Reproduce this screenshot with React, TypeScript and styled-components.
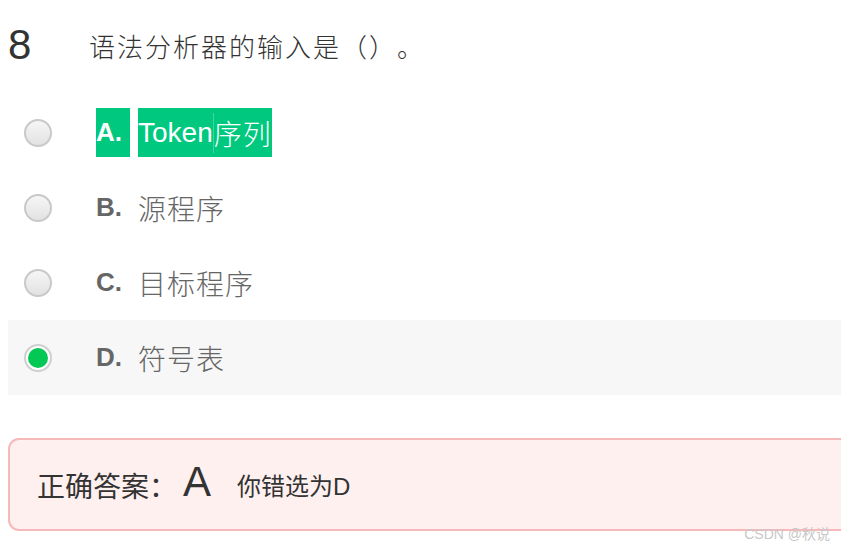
import styled, { createGlobalStyle, css } from "styled-components";

const GlobalStyle = createGlobalStyle`
  html, body {
    margin: 0;
    padding: 0;
    background: #ffffff;
    overflow: hidden;
  }
  body {
    font-family: "Liberation Sans", Arial, "Noto Sans CJK SC", sans-serif;
    text-spacing-trim: space-all;
  }
`;

const Page = styled.div`
  position: relative;
  width: 841px;
  height: 549px;
  padding-left: 8px;
  box-sizing: border-box;
  overflow: hidden;
`;

const QuestionHeader = styled.div`
  display: flex;
  align-items: center;
  height: 95px;
  padding-bottom: 5px;
  box-sizing: border-box;
`;

const QuestionNumber = styled.span`
  width: 81px;
  font-family: "Liberation Sans", Arial, sans-serif;
  font-size: 42px;
  color: #333333;
  line-height: 1;
`;

const QuestionText = styled.span`
  font-family: "Noto Sans CJK SC", sans-serif;
  font-weight: 300;
  font-size: 26px;
  color: #333333;
  letter-spacing: 2px;
  text-spacing-trim: space-all;
`;

const OptionList = styled.div`
  display: flex;
  flex-direction: column;
`;

const OptionRow = styled.div<{ $selected: boolean }>`
  display: flex;
  align-items: center;
  height: 75px;
  background: ${({ $selected }) => ($selected ? "#f7f7f7" : "transparent")};
`;

const Radio = styled.span<{ $checked: boolean }>`
  position: relative;
  width: 28px;
  height: 28px;
  margin-left: 16px;
  margin-right: 44px;
  border-radius: 50%;
  box-sizing: border-box;
  border: 2px solid #c9c9c9;
  background: linear-gradient(#f6f6f6, #e2e2e2);
  flex-shrink: 0;
  ${({ $checked }) =>
    $checked &&
    css`
      background: #ffffff;
      border-color: #cfcfcf;
      &::after {
        content: "";
        position: absolute;
        inset: 2px;
        border-radius: 50%;
        background: #03c853;
      }
    `}
`;

const Letter = styled.span<{ $correct: boolean }>`
  display: inline-flex;
  align-items: center;
  height: 49px;
  width: 34px;
  white-space: pre;
  font-family: "Liberation Sans", Arial, sans-serif;
  font-weight: bold;
  font-size: 26px;
  color: ${({ $correct }) => ($correct ? "#ffffff" : "#666666")};
  background: ${({ $correct }) => ($correct ? "#00c97f" : "transparent")};
  margin-right: 8px;
  overflow: hidden;
`;

const OptionText = styled.span<{ $correct: boolean }>`
  display: inline-flex;
  align-items: center;
  height: 49px;
  font-family: "Liberation Sans", Arial, "Noto Sans CJK SC", sans-serif;
  font-size: 28px;
  color: ${({ $correct }) => ($correct ? "#ffffff" : "#666666")};
  background: ${({ $correct }) => ($correct ? "#00c97f" : "transparent")};
`;

const CjkPart = styled.span<{ $correct: boolean }>`
  font-family: "Noto Sans CJK SC", sans-serif;
  font-weight: 300;
  font-size: 28px;
  letter-spacing: 1px;
  ${({ $correct }) =>
    $correct &&
    css`
      border-left: 1px solid #3cd89c;
    `}
`;

const AnswerBox = styled.div`
  display: flex;
  align-items: center;
  margin-top: 43px;
  height: 93px;
  width: 850px;
  box-sizing: border-box;
  padding-left: 27px;
  border: 2px solid #f6b8b8;
  border-radius: 11px;
  background: #fff0f0;
  color: #333333;
`;

const AnswerLabel = styled.span`
  width: 146px;
  font-family: "Noto Sans CJK SC", sans-serif;
  font-size: 28px;
  white-space: nowrap;
`;

const AnswerValue = styled.span`
  font-family: "Liberation Sans", Arial, sans-serif;
  font-size: 42px;
  margin-right: 26px;
  margin-top: -6px;
`;

const AnswerNote = styled.span`
  font-family: "Liberation Sans", Arial, "Noto Sans CJK SC", sans-serif;
  font-size: 24px;
`;

const Watermark = styled.span`
  position: absolute;
  right: 11px;
  bottom: 6px;
  font-family: "Liberation Sans", Arial, "Noto Sans CJK SC", sans-serif;
  font-size: 14px;
  color: #c8c8c8;
`;

type Option = { key: string; text: string; latin?: string };

const options: Option[] = [
  { key: "A", latin: "Token", text: "序列" },
  { key: "B", text: "源程序" },
  { key: "C", text: "目标程序" },
  { key: "D", text: "符号表" },
];

const correctKey = "A";
const chosenKey = "D";

export default function App() {
  return (
    <>
      <GlobalStyle />
      <Page>
        <QuestionHeader>
          <QuestionNumber>8</QuestionNumber>
          <QuestionText>语法分析器的输入是（）。</QuestionText>
        </QuestionHeader>
        <OptionList>
          {options.map((opt) => {
            const isCorrect = opt.key === correctKey;
            const isChosen = opt.key === chosenKey;
            return (
              <OptionRow key={opt.key} $selected={isChosen}>
                <Radio $checked={isChosen} />
                <Letter $correct={isCorrect}>{opt.key}. </Letter>
                <OptionText $correct={isCorrect}>
                  {opt.latin}
                  <CjkPart $correct={isCorrect}>{opt.text}</CjkPart>
                </OptionText>
              </OptionRow>
            );
          })}
        </OptionList>
        <AnswerBox>
          <AnswerLabel>正确答案：</AnswerLabel>
          <AnswerValue>A</AnswerValue>
          <AnswerNote>你错选为D</AnswerNote>
        </AnswerBox>
        <Watermark>CSDN @秋说</Watermark>
      </Page>
    </>
  );
}
